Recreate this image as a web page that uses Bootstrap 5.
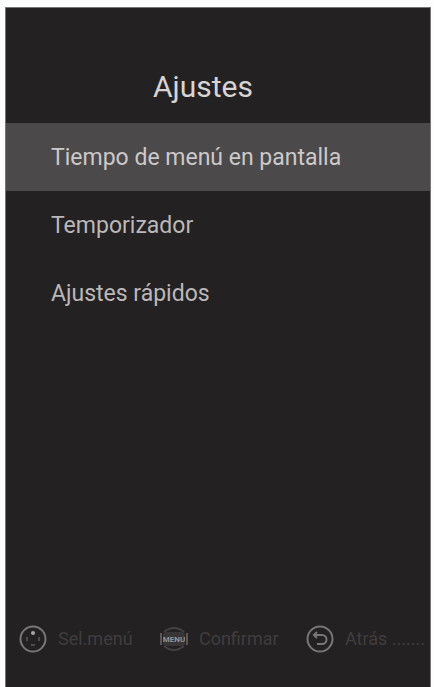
<!DOCTYPE html>
<html lang="es">
<head>
<meta charset="utf-8">
<meta name="viewport" content="width=device-width, initial-scale=1">
<title>Ajustes</title>
<link href="https://cdn.jsdelivr.net/npm/bootstrap@5.3.0/dist/css/bootstrap.min.css" rel="stylesheet">
<style>
body { background: #fdfdfd; font-family: Roboto, "Liberation Sans", sans-serif; padding: 7px 3px 0 5px; }
.menu-panel { background: #242122; border: 1px solid #777576; border-bottom: 0; color: #c6c4c5; }
.menu-title { font-size: 30px; line-height: 36px; padding: 61px 30px 18px 0; color: #d6d4d5; }
.menu-item { font-size: 23px; line-height: 28px; padding: 21px 45px 19px; background: transparent; color: #bab8b9; border: 0; text-align: left; }
.menu-item.active { background: #4b494a; color: #cbc9ca; }
.key-hints { color: #403d3e; font-size: 18px; line-height: 28px; padding: 0 5px 34px 13px; }
.key-hints svg { color: #797677; flex: none; }
.hint { gap: 11px; white-space: nowrap; }
</style>
</head>
<body class="min-vh-100 d-flex">
<main class="menu-panel flex-fill d-flex flex-column">
  <h1 class="menu-title fw-normal text-center m-0">Ajustes</h1>
  <nav class="d-flex flex-column" aria-label="Ajustes">
    <button type="button" class="menu-item active">Tiempo de menú en pantalla</button>
    <button type="button" class="menu-item">Temporizador</button>
    <button type="button" class="menu-item">Ajustes rápidos</button>
  </nav>
  <footer class="key-hints d-flex justify-content-between mt-auto">
    <div class="hint d-flex align-items-center">
      <svg width="28" height="28" viewBox="0 0 28 28" fill="none" stroke="currentColor" aria-hidden="true"><circle cx="14" cy="14" r="12.5" stroke-width="2"/><circle cx="14" cy="8" r="2" fill="#aaa7a8" stroke="none"/><path d="M12 20h4M8 12v4M20 12v4" stroke="#5d5a5b" stroke-width="1.5"/></svg>
      <span>Sel.menú</span>
    </div>
    <div class="hint d-flex align-items-center">
      <svg width="28" height="28" viewBox="0 0 28 28" fill="none" aria-hidden="true"><path d="M4 7Q14-1 24 7M4 21q10 8 20 0" stroke="#454243" stroke-width="2"/><path d="M1 8v12M27 8v12" stroke="#6d6a6b" stroke-width="1.5"/><rect x="3" y="7" width="22" height="14" rx="3" fill="#383536"/><text x="14" y="17" text-anchor="middle" font-size="8" font-weight="bold" fill="#969394">MENU</text></svg>
      <span>Confirmar</span>
    </div>
    <div class="hint d-flex align-items-center">
      <svg width="28" height="28" viewBox="0 0 28 28" fill="none" stroke="currentColor" aria-hidden="true"><circle cx="14" cy="14" r="12.5" stroke-width="2"/><path d="M8 10h8a4.5 4.5 0 0 1 0 9h-5M11 7l-3 3 3 3" stroke-width="2"/></svg>
      <span>Atrás .......</span>
    </div>
  </footer>
</main>
<script src="https://cdn.jsdelivr.net/npm/bootstrap@5.3.0/dist/js/bootstrap.bundle.min.js"></script>
</body>
</html>
